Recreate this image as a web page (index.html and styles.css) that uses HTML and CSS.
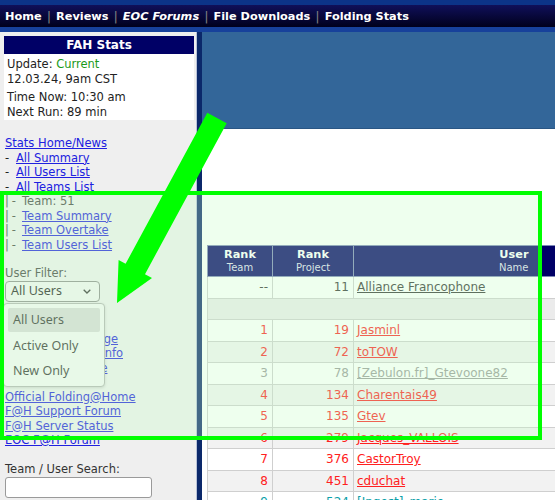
FILE: index.html
```html
<!DOCTYPE html>
<html>
<head>
<meta charset="utf-8">
<link rel="stylesheet" href="styles.css">
</head>
<body>
<header class="topbar">
  <nav class="nav">
    <a class="nav-link" href="#">Home</a><span class="sep">|</span>
    <a class="nav-link" href="#">Reviews</a><span class="sep">|</span>
    <a class="nav-link nav-italic" href="#">EOC Forums</a><span class="sep">|</span>
    <a class="nav-link" href="#">File Downloads</a><span class="sep">|</span>
    <a class="nav-link" href="#">Folding Stats</a>
  </nav>
</header>
<div class="main">
  <aside class="sidebar">
    <div class="statbox">
      <div class="statbox-head">FAH Stats</div>
      <div class="statbox-body">
        <div>Update: <span class="current">Current</span></div>
        <div>12.03.24, 9am CST</div>
        <div class="gap">Time Now: 10:30 am</div>
        <div>Next Run: 89 min</div>
      </div>
    </div>
    <ul class="links first">
      <li><a href="#">Stats Home/News</a></li>
      <li><span class="dash">-</span><a href="#">All Summary</a></li>
      <li><span class="dash">-</span><a href="#">All Users List</a></li>
      <li><span class="dash">-</span><a href="#">All Teams List</a></li>
      <li class="muted"><span class="tree">|-</span>Team: 51</li>
      <li class="muted"><span class="tree">|-</span><a href="#">Team Summary</a></li>
      <li class="muted"><span class="tree">|-</span><a href="#">Team Overtake</a></li>
      <li class="muted"><span class="tree">|-</span><a href="#">Team Users List</a></li>
    </ul>
    <div class="filter">
      <div class="muted">User Filter:</div>
      <div class="select-wrap">
        <div class="select">All Users
          <svg class="chev" width="8" height="5" viewBox="0 0 8 5"><path d="M0.7 0.7 L4 4 L7.3 0.7" fill="none" stroke="#333" stroke-width="1.3"/></svg>
        </div>
        <ul class="dropdown">
          <li class="opt active">All Users</li>
          <li class="opt">Active Only</li>
          <li class="opt">New Only</li>
        </ul>
      </div>
    </div>
    <ul class="links group2">
      <li><a href="#">Folding Teams Page</a></li>
      <li><a href="#">F@H Work Units Info</a></li>
      <li><a href="#">F@H Install Guide</a></li>
    </ul>
    <ul class="links group3">
      <li><a href="#">Official Folding@Home</a></li>
      <li><a href="#">F@H Support Forum</a></li>
      <li><a href="#">F@H Server Status</a></li>
      <li><a href="#">EOC F@H Forum</a></li>
    </ul>
    <div class="search">
      <div class="search-label">Team / User Search:</div>
      <div class="search-input"></div>
    </div>
  </aside>
  <section class="content">
    <div class="banner"></div>
    <table class="stats">
      <colgroup><col class="w1"><col class="w2"><col class="w3"></colgroup>
      <thead>
        <tr>
          <th>Rank<span class="thsub">Team</span></th>
          <th>Rank<span class="thsub">Project</span></th>
          <th class="th-user">User<span class="thsub">Name</span></th>
        </tr>
      </thead>
      <tbody>
        <tr class="team"><td class="num">--</td><td class="num">11</td><td><a href="#">Alliance Francophone</a></td></tr>
        <tr class="spacer"><td colspan="3"></td></tr>
        <tr class="odd red"><td class="num">1</td><td class="num">19</td><td><a href="#">Jasminl</a></td></tr>
        <tr class="even red"><td class="num">2</td><td class="num">72</td><td><a href="#">toTOW</a></td></tr>
        <tr class="odd grey"><td class="num">3</td><td class="num">78</td><td><a href="#">[Zebulon.fr]_Gtevoone82</a></td></tr>
        <tr class="even red"><td class="num">4</td><td class="num">134</td><td><a href="#">Charentais49</a></td></tr>
        <tr class="odd red"><td class="num">5</td><td class="num">135</td><td><a href="#">Gtev</a></td></tr>
        <tr class="even red"><td class="num">6</td><td class="num">279</td><td><a href="#">Jacques_VALLOIS</a></td></tr>
        <tr class="odd red"><td class="num">7</td><td class="num">376</td><td><a href="#">CastorTroy</a></td></tr>
        <tr class="even red"><td class="num">8</td><td class="num">451</td><td><a href="#">cduchat</a></td></tr>
        <tr class="odd teal"><td class="num">9</td><td class="num">524</td><td><a href="#">[Ingest]_marie</a></td></tr>
      </tbody>
    </table>
  </section>
</div>
<div class="highlight"></div>
<svg class="arrow" width="555" height="500" viewBox="0 0 555 500">
  <polygon points="207.3,112.8 226.7,123.2 145,274.2 152,278 117,303 118.6,260 125.6,263.8" fill="#00ff00"/>
</svg>
</body>
</html>
```

FILE: styles.css
```css
html, body {
  margin: 0;
  padding: 0;
}
body {
  width: 555px;
  height: 500px;
  overflow: hidden;
  position: relative;
  background: #fff;
  font-family: "DejaVu Sans", Verdana, sans-serif;
}
a { color: #2020e0; }

.topbar {
  height: 22px;
  border-top: 5px solid #0c3488;
  border-bottom: 5px solid #17419b;
  background: linear-gradient(#10105a, #00001c);
}
.nav {
  display: flex;
  align-items: center;
  height: 22px;
  padding-left: 5px;
  font-size: 11.3px;
  font-weight: bold;
}
.nav-link {
  color: #fff;
  text-decoration: none;
}
.nav-italic { font-style: italic; }
.sep {
  color: #808080;
  font-weight: normal;
  font-size: 13px;
  margin: 0 5px;
}

.main {
  display: flex;
  height: 468px;
}
.sidebar {
  width: 197px;
  flex: none;
  box-sizing: border-box;
  background: #efefef;
  border-right: 1px solid #b8c2d8;
  padding: 4px 0 0 4px;
  font-size: 11.5px;
  line-height: 14.5px;
  color: #222;
}
.statbox {
  width: 190px;
  background: #fff;
}
.statbox-head {
  height: 18px;
  line-height: 18px;
  background: #000066;
  color: #fff;
  font-weight: bold;
  font-size: 12px;
  text-align: center;
}
.statbox-body {
  padding: 3px 0 1px 3px;
}
.statbox-body .gap { margin-top: 4px; }
.current { color: #1a9a1a; }

.links {
  list-style: none;
  margin: 0;
  padding: 0 0 0 1px;
}
.links.first { margin-top: 16px; }
.links.group2 { margin-top: 30px; }
.links.group3 { margin-top: 14.5px; }
.muted { color: #444; }
.dash {
  display: inline-block;
  width: 11px;
}
.tree {
  display: inline-block;
  width: 17px;
  letter-spacing: 3px;
}

.filter { margin-top: 14px; padding-left: 1px; }
.select-wrap { position: relative; }
.select {
  width: 95px;
  height: 21px;
  box-sizing: border-box;
  border: 1px solid #8f8f8f;
  border-radius: 4px;
  background: #f4f4f4;
  display: flex;
  align-items: center;
  justify-content: space-between;
  padding: 0 8px 0 5px;
  font-family: "Noto Sans", sans-serif;
  font-size: 12.5px;
  color: #222;
}
.dropdown {
  position: absolute;
  left: -2px;
  top: 22px;
  width: 102px;
  height: 84px;
  box-sizing: border-box;
  margin: 0;
  padding: 4px 4px;
  list-style: none;
  background: #f7f7f7;
  border: 1px solid #b4b4b4;
  border-radius: 4px;
  box-shadow: 0 1px 3px rgba(0,0,0,0.15);
  font-family: "Noto Sans", sans-serif;
  font-size: 12.5px;
  color: #333;
  z-index: 1;
}
.opt {
  height: 25px;
  line-height: 25px;
  padding-left: 5px;
  border-radius: 2px;
}
.opt.active { background: #d9d9d9; height: 24px; line-height: 24px; margin-bottom: 1px; }

.search { margin-top: 14px; padding-left: 1px; }
.search-label { color: #333; }
.search-input {
  width: 147px;
  height: 21px;
  box-sizing: border-box;
  margin-top: 1px;
  background: #fff;
  border: 1px solid #9a9a9a;
  border-radius: 3px;
}

.content {
  flex: 1;
  border-left: 5px solid #0b286a;
  min-width: 0;
}
.banner {
  height: 96px;
  background: #336699;
  border-bottom: 1px solid #2a5684;
}
.stats {
  margin: 116px 0 0 5px;
  border-collapse: collapse;
  table-layout: fixed;
  width: 360px;
  font-size: 12px;
}
.w1 { width: 65px; }
.w2 { width: 81px; }
.w3 { width: 214px; }
.stats th {
  background: #000066;
  color: #fff;
  border: 1px solid #7d88b6;
  font-size: 11.3px;
  font-weight: bold;
  line-height: 13px;
  height: 31px;
  padding: 2px 4px;
  box-sizing: border-box;
  text-align: center;
}
.stats th.th-user {
  text-align: right;
  padding-right: 39px;
  border-right: none;
}
.thsub {
  display: block;
  font-weight: normal;
  font-size: 10px;
  color: #dde;
}
.stats td {
  height: 21.5px;
  box-sizing: border-box;
  padding: 0 4px 0 3px;
  border: 1px solid #cfcfcf;
  white-space: nowrap;
  overflow: hidden;
}
.stats td.num { text-align: right; padding-right: 4px; }
.team td { background: #fff; color: #333; }
.team a { color: #333; }
.spacer td { background: #ebebeb; }
.odd td { background: #fff; }
.even td { background: #f2f2f2; }
.red td, .red a { color: #ff2020; }
.grey td, .grey a { color: #999; }
.teal td, .teal a { color: #0aa0a8; }

.highlight {
  position: absolute;
  left: 0;
  top: 191px;
  width: 542px;
  height: 249px;
  box-sizing: border-box;
  border: 4px solid #00ff00;
  background: rgba(200, 255, 200, 0.3);
  z-index: 2;
}
.arrow {
  position: absolute;
  left: 0;
  top: 0;
  z-index: 3;
}
```
